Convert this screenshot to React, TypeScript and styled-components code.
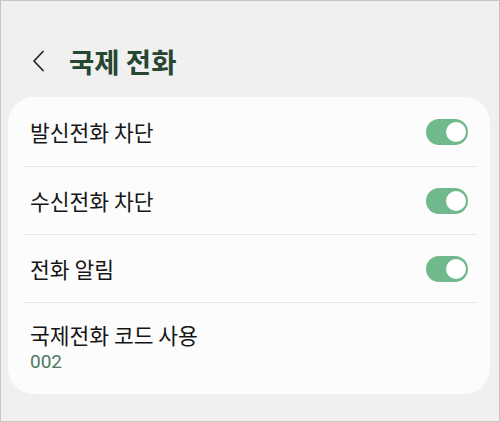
import styled, { createGlobalStyle } from 'styled-components';

const Global = createGlobalStyle`
  html, body { margin: 0; padding: 0; }
  body { font-family: "Noto Sans CJK KR", "Noto Sans", sans-serif; }
`;

const Screen = styled.div`
  box-sizing: border-box;
  width: 500px;
  height: 422px;
  border: 1px solid #c6c6c6;
  background: #f0f0f0;
  display: flex;
  flex-direction: column;
  overflow: hidden;
`;

const Header = styled.header`
  height: 96px;
  display: flex;
  align-items: center;
  padding-left: 30px;
  gap: 22px;
  box-sizing: border-box;
  padding-top: 24px;
`;

const BackButton = styled.button`
  border: 0;
  background: none;
  padding: 0;
  width: 16px;
  height: 22px;
  display: flex;
  align-items: center;
  justify-content: center;
  color: #2a2a2a;
`;

const Title = styled.h1`
  margin: 0;
  font-size: 27.5px;
  font-weight: 700;
  color: #264632;
  letter-spacing: 0;
`;

const Card = styled.section`
  margin: 0 9px 0 7px;
  background: #fcfcfc;
  border-radius: 26px;
  display: flex;
  flex-direction: column;
`;

const Row = styled.div<{ $height: number; $last?: boolean }>`
  height: ${(p) => p.$height}px;
  margin: 0 13px 0 16px;
  padding: 0 9px 0 6px;
  display: flex;
  align-items: center;
  justify-content: space-between;
  border-bottom: ${(p) => (p.$last ? 'none' : '1.5px solid #e6e6e6')};
  box-sizing: border-box;
`;

const TextCol = styled.div`
  display: flex;
  flex-direction: column;
`;

const Label = styled.span`
  font-size: 21.5px;
  color: #161616;
  line-height: 27px;
`;

const Sub = styled.span`
  font-size: 19px;
  color: #4d7860;
  line-height: 28px;
  font-family: "Roboto", "Noto Sans", sans-serif;
`;

const Toggle = styled.span`
  width: 42px;
  height: 26px;
  border-radius: 13px;
  background: #70b98c;
  display: flex;
  align-items: center;
  justify-content: flex-end;
  padding: 0 2px;
  box-sizing: border-box;
`;

const Thumb = styled.span`
  width: 20px;
  height: 20px;
  border-radius: 50%;
  background: #fff;
  box-sizing: border-box;
`;

function Switch() {
  return (
    <Toggle role="switch" aria-checked="true">
      <Thumb />
    </Toggle>
  );
}

const rows = [
  { label: '발신전화 차단', height: 70 },
  { label: '수신전화 차단', height: 68 },
  { label: '전화 알림', height: 68 },
];

export default function App() {
  return (
    <>
      <Global />
      <Screen>
        <Header>
          <BackButton aria-label="뒤로">
            <svg width="14" height="22" viewBox="0 0 14 22" fill="none">
              <path d="M11 1.5 L2 11 L11 20.5" stroke="currentColor" strokeWidth="1.8" strokeLinecap="round" strokeLinejoin="round" />
            </svg>
          </BackButton>
          <Title>국제 전화</Title>
        </Header>
        <Card>
          {rows.map((r) => (
            <Row key={r.label} $height={r.height}>
              <Label>{r.label}</Label>
              <Switch />
            </Row>
          ))}
          <Row $height={91} $last>
            <TextCol>
              <Label>국제전화 코드 사용</Label>
              <Sub>002</Sub>
            </TextCol>
          </Row>
        </Card>
      </Screen>
    </>
  );
}
